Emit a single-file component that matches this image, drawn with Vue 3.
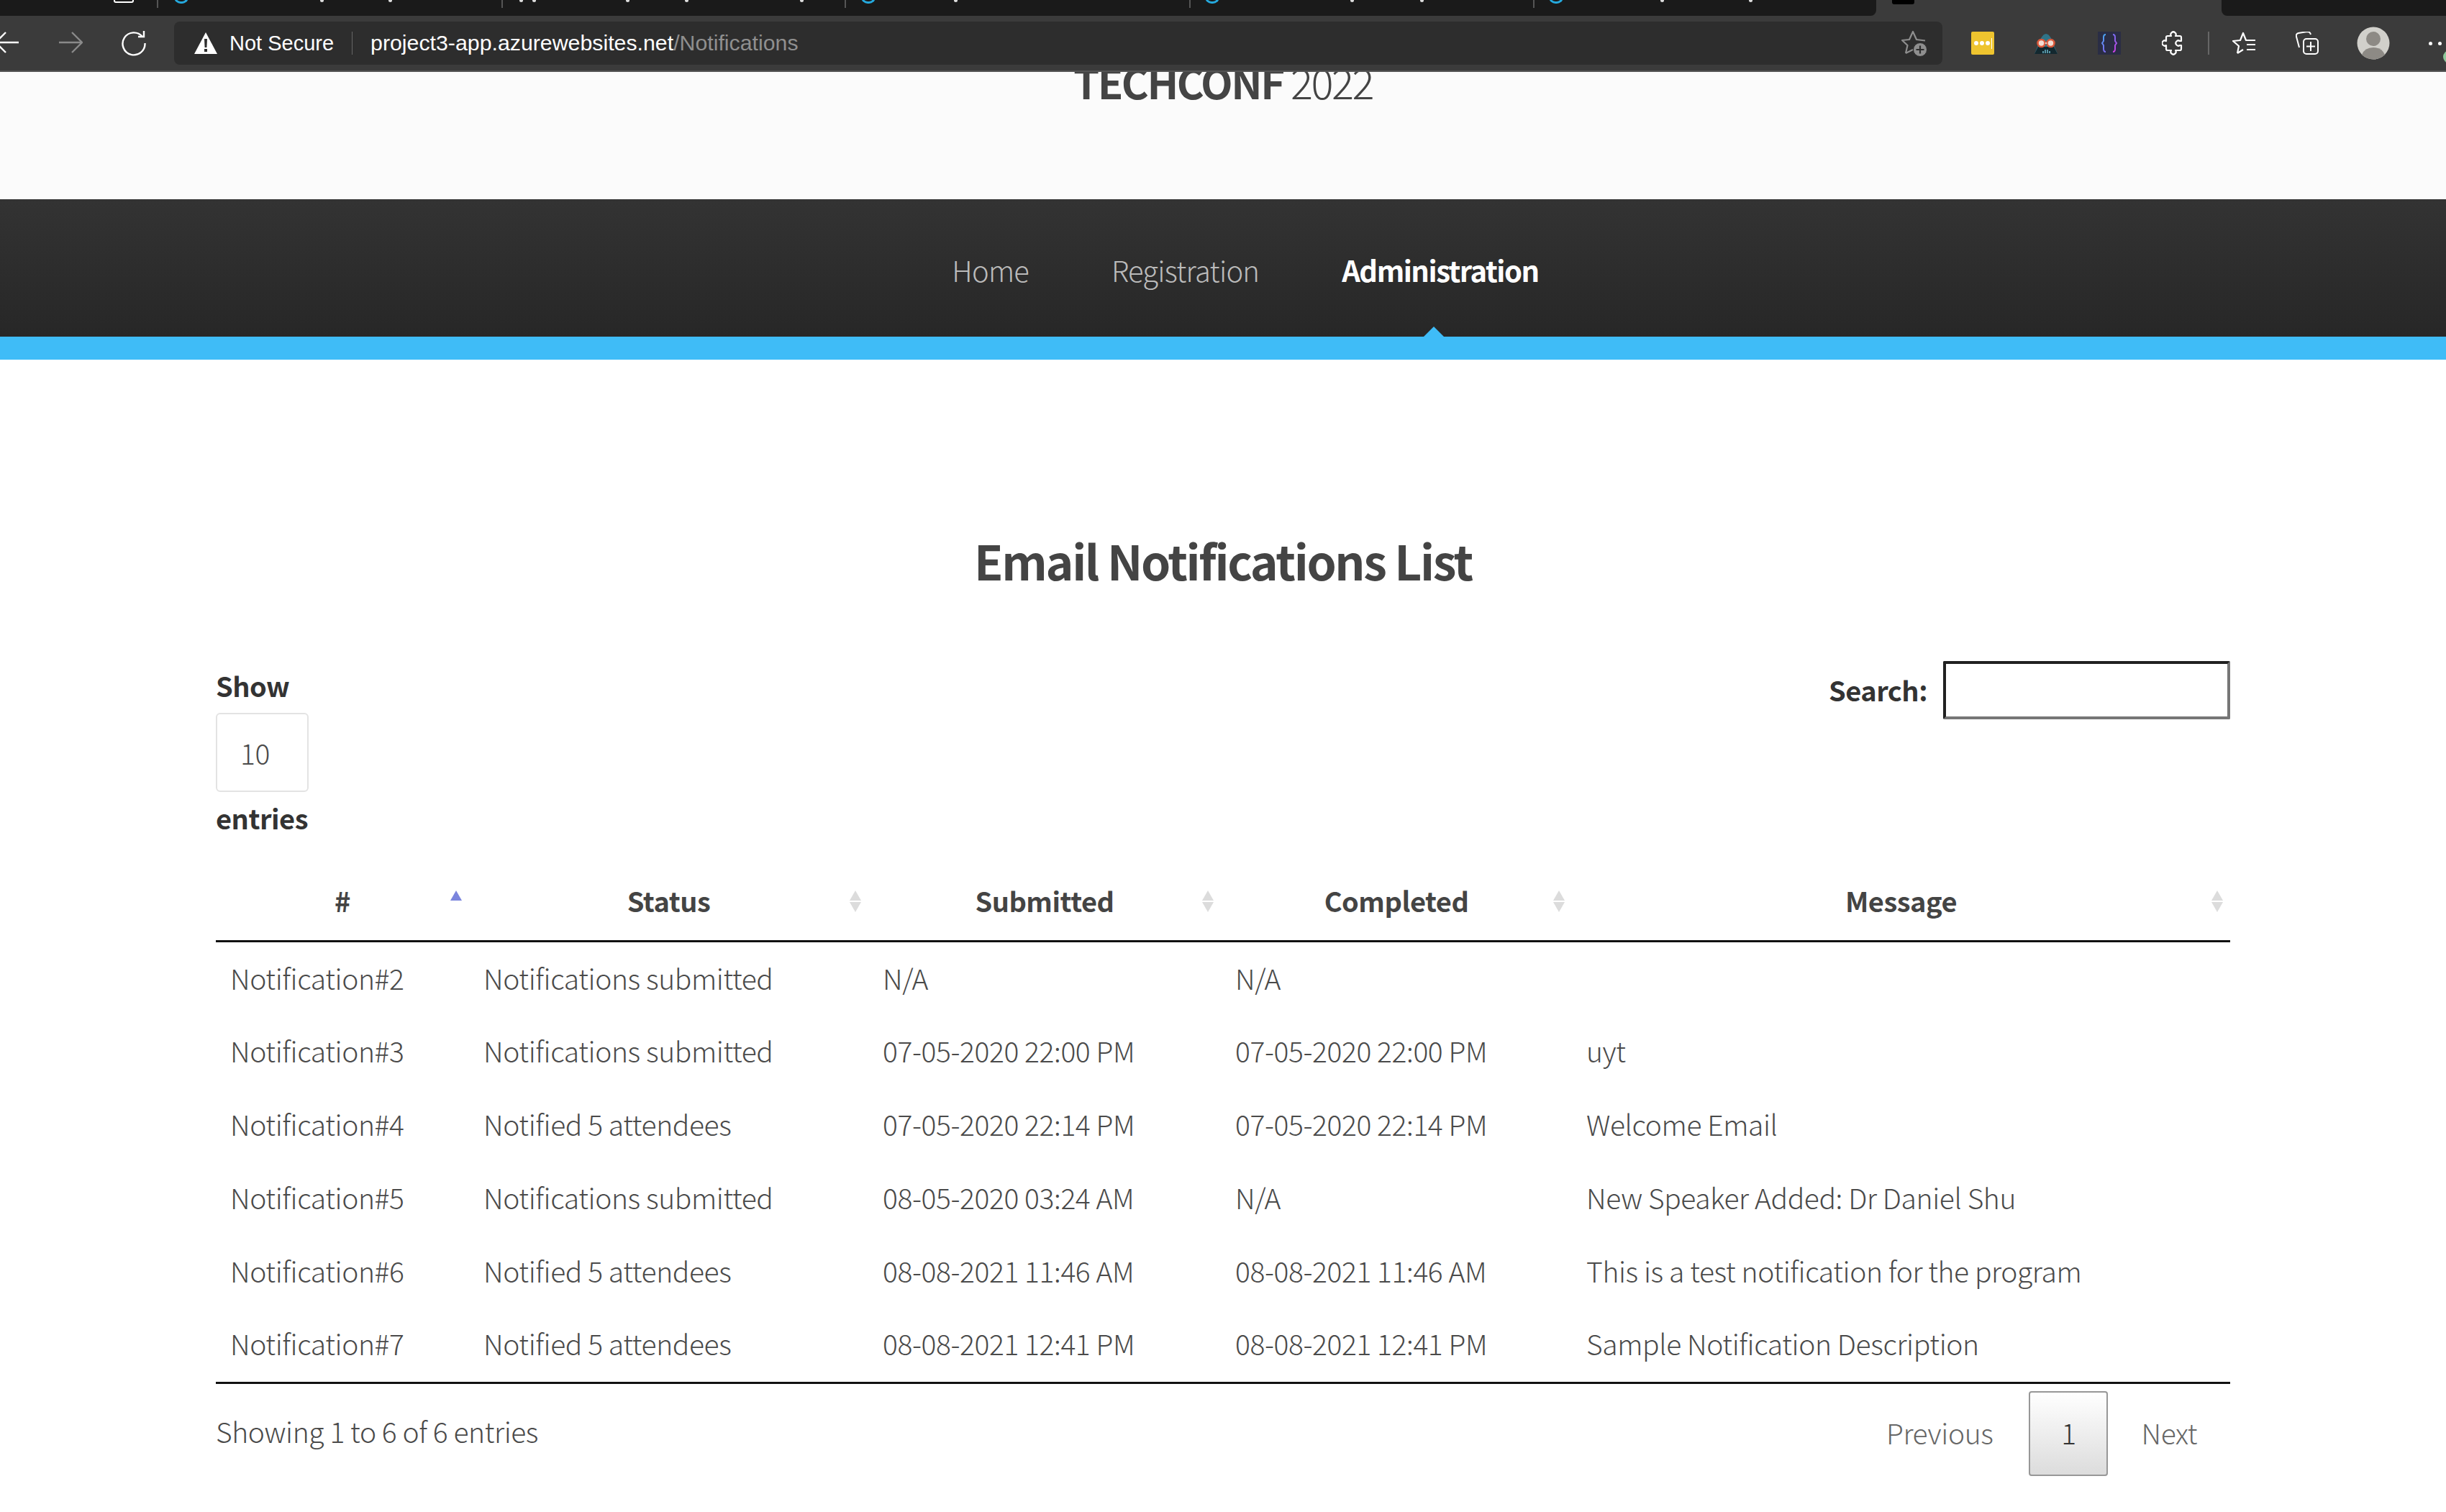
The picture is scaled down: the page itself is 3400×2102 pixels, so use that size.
<template>
  <div class="page">
    <!-- browser chrome -->
    <div class="chrome">
      <div class="tabstrip">
        <div class="tabs-left">
          <span v-for="x in tabSeps" :key="x" class="tab-sep" :style="{ left: x + 'px' }"></span>
          <span v-for="x in tabFavs" :key="x" class="tab-fav-blue" :style="{ left: x + 'px' }"></span>
          <span v-for="x in tabStubs" :key="x" class="tab-stub" :style="{ left: x + 'px' }"></span>
          <span class="tab-home"></span>
        </div>
        <div class="tab-active"><span class="tab-fav"></span></div>
        <div class="tabs-right"></div>
      </div>
      <div class="toolbar">
        <div class="nav-btns">
          <svg class="back" width="24" height="40" viewBox="0 0 24 40"><path d="M-6 19H26M8 5L-6 19L8 33" fill="none" stroke="#fff" stroke-width="2.400"/></svg>
          <svg class="forward" width="34" height="40" viewBox="0 0 34 40"><path d="M1 19H33M19 5L33 19L19 33" fill="none" stroke="#8a8a8a" stroke-width="2.400"/></svg>
          <svg class="reload" width="36" height="40" viewBox="0 0 36 40"><path d="M30 11A15.500 15.500 0 1 0 33.500 20" fill="none" stroke="#fff" stroke-width="2.400"/><path d="M32 3V11H24" fill="none" stroke="#fff" stroke-width="2.400"/></svg>
        </div>
        <div class="address">
          <svg width="32" height="30" viewBox="0 0 32 30"><path d="M16 0L32 30H0Z" fill="#fff"/><path d="M14 9h4l-.6 12h-2.800zM14 23h4v4h-4z" fill="#2d2d2d"/></svg>
          <span class="secure">Not Secure</span>
          <span class="addr-sep"></span>
          <span class="url">project3-app.azurewebsites.net<span class="url-path">/Notifications</span></span>
          <svg class="fav-add" width="38" height="38" viewBox="0 0 38 38">
            <path d="M7 33L9.500 22L2 15L12 14L17 3L22 14L34 15.500M7 33L17 28" fill="none" stroke="#8e8e8e" stroke-width="2.200" stroke-linejoin="round"/>
            <circle cx="27" cy="28" r="9.500" fill="#8e8e8e" stroke="#2d2d2d" stroke-width="1"/>
            <path d="M21.500 28H32.500M27 22.500V33.500" stroke="#2d2d2d" stroke-width="2.200"/>
          </svg>
        </div>
        <div class="ext-icons">
          <div class="ext-pass"><span></span><span></span><span></span><i></i></div>
          <svg class="ext-darth" width="32" height="30" viewBox="0 0 32 30">
            <path d="M9 8Q16 -4 23 8L32 30H0Z" fill="#2f7488"/>
            <path d="M5 20H27L32 30H0Z" fill="#13282f"/>
            <circle cx="9.500" cy="15" r="5" fill="#f3ddd3" stroke="#d9583a" stroke-width="2.600"/>
            <circle cx="22.500" cy="15" r="5" fill="#f3ddd3" stroke="#d9583a" stroke-width="2.600"/>
            <path d="M14.500 15H17.500" stroke="#f3ddd3" stroke-width="1.500"/>
            <path d="M12 26V29M15 24V29M18 24V29M21 26V29" stroke="#6db6cc" stroke-width="1.500"/>
          </svg>
          <svg class="ext-braces" width="32" height="32" viewBox="0 0 32 32">
            <defs>
              <linearGradient id="braceL" x1="0" y1="0" x2="0" y2="1"><stop offset="0" stop-color="#4aa3f0"/><stop offset="1" stop-color="#7a6cf0"/></linearGradient>
              <linearGradient id="braceR" x1="0" y1="0" x2="0" y2="1"><stop offset="0" stop-color="#7a6cf0"/><stop offset="1" stop-color="#c840e0"/></linearGradient>
            </defs>
            <rect width="32" height="32" fill="#2a2d45"/>
            <path d="M11 4Q8 4 8 8V13L6 16L8 19V24Q8 28 11 28" fill="none" stroke="url(#braceL)" stroke-width="2"/>
            <path d="M21 4Q24 4 24 8V13L26 16L24 19V24Q24 28 21 28" fill="none" stroke="url(#braceR)" stroke-width="2"/>
          </svg>
          <svg class="ext-puzzle" width="30" height="34" viewBox="0 0 30 34"><path d="M8 7H13A3.600 3.600 0 1 1 19 7H25Q27 7 27 9V14H25A3.600 3.600 0 1 0 25 20H27V25Q27 27 25 27H19A3.600 3.600 0 1 1 13 27H8Q6 27 6 25V20A3.600 3.600 0 1 1 6 14V9Q6 7 8 7Z" fill="none" stroke="#fff" stroke-width="2.200" stroke-linejoin="round"/></svg>
          <span class="tool-sep"></span>
          <svg class="ext-favs" width="32" height="32" viewBox="0 0 32 32"><path d="M7 30L9 20L1 13L11 12L15 2L19 12H32M20 18H32M20 25H32M7 30L15 25" fill="none" stroke="#fff" stroke-width="2.200" stroke-linejoin="round"/></svg>
          <svg class="ext-coll" width="32" height="32" viewBox="0 0 32 32"><path d="M5 22L1 7Q0 3 4 2L16 0Q20 0 21 4" fill="none" stroke="#fff" stroke-width="2"/><rect x="11" y="10" width="20" height="21" rx="4" fill="none" stroke="#fff" stroke-width="2"/><path d="M21 14V27M15 20.500H27" stroke="#fff" stroke-width="2"/></svg>
          <svg class="avatar" width="46" height="46" viewBox="0 0 46 46"><circle cx="23" cy="23" r="22.500" fill="#d1d0cb"/><circle cx="23" cy="17" r="10" fill="#8d8a85"/><path d="M7 39Q11 29 23 29Q35 29 39 39Q32 45.500 23 45.500Q14 45.500 7 39Z" fill="#8d8a85"/></svg>
          <div class="more"><span></span><span></span><span></span></div>
          <span class="chip"></span>
        </div>
      </div>
    </div>

    <!-- site header -->
    <header class="banner">
      <h1 class="brand"><b>TECHCONF</b> 2022</h1>
    </header>
    <nav class="mainnav">
      <a class="nav-link">Home</a>
      <a class="nav-link">Registration</a>
      <a class="nav-link active">Administration</a>
    </nav>

    <main class="content">
      <h2 class="page-title">Email Notifications List</h2>

      <div class="controls">
        <label class="length">
          <span>Show</span>
          <span class="length-box">10</span>
          <span>entries</span>
        </label>
        <label class="search">
          <span class="search-label">Search:</span>
          <input type="text" class="search-input" />
        </label>
      </div>

      <table class="grid">
        <colgroup>
          <col v-for="w in colWidths" :key="w" :style="{ width: w + 'px' }" />
        </colgroup>
        <thead>
          <tr>
            <th v-for="(h, i) in headers" :key="h">
              {{ h }}
              <span class="sort">
                <svg width="16" height="30" viewBox="0 0 16 30">
                  <path d="M8 0L16 14H0Z" :fill="i === 0 ? '#7b85dd' : '#dcdcdc'" />
                  <path v-if="i !== 0" d="M0 16H16L8 30Z" fill="#dcdcdc" />
                </svg>
              </span>
            </th>
          </tr>
        </thead>
        <tbody>
          <tr v-for="row in rows" :key="row[0]">
            <td v-for="(cell, i) in row" :key="i">{{ cell }}</td>
          </tr>
        </tbody>
      </table>

      <div class="table-foot">
        <div class="info">Showing 1 to 6 of 6 entries</div>
        <div class="pager">
          <a class="page-btn prev">Previous</a>
          <a class="page-btn current">1</a>
          <a class="page-btn">Next</a>
        </div>
      </div>
    </main>
  </div>
</template>

<script setup>
const tabSeps = [218, 697, 1174, 1653, 2131]
const tabFavs = [242, 1197, 1675, 2153]
const tabStubs = [445, 540, 722, 740, 870, 952, 1112, 1326, 1877, 1974, 2308, 2431]
const colWidths = [352, 555, 490, 488, 915]
const headers = ['#', 'Status', 'Submitted', 'Completed', 'Message']
const rows = [
  ['Notification#2', 'Notifications submitted', 'N/A', 'N/A', ''],
  ['Notification#3', 'Notifications submitted', '07-05-2020 22:00 PM', '07-05-2020 22:00 PM', 'uyt'],
  ['Notification#4', 'Notified 5 attendees', '07-05-2020 22:14 PM', '07-05-2020 22:14 PM', 'Welcome Email'],
  ['Notification#5', 'Notifications submitted', '08-05-2020 03:24 AM', 'N/A', 'New Speaker Added: Dr Daniel Shu'],
  ['Notification#6', 'Notified 5 attendees', '08-08-2021 11:46 AM', '08-08-2021 11:46 AM', 'This is a test notification for the program'],
  ['Notification#7', 'Notified 5 attendees', '08-08-2021 12:41 PM', '08-08-2021 12:41 PM', 'Sample Notification Description'],
]
</script>

<style>
html,
body {
  margin: 0;
  background: #fff;
}
</style>

<style scoped>
.page {
  width: 3400px;
  height: 2102px;
  overflow: hidden;
  font-family: "Noto Sans CJK SC", "Noto Sans", sans-serif;
  font-weight: 300;
  color: #4a4a4a;
  font-size: 39px;
  letter-spacing: -0.4px;
}

.chrome {
  height: 98px;
  background: #3b3b3b;
  border-bottom: 2px solid #555;
  font-family: "Liberation Sans", sans-serif;
  font-weight: 400;
  letter-spacing: 0;
}

.tabstrip {
  height: 22px;
  display: flex;
}

.tabs-left {
  position: relative;
  width: 2608px;
  background: #1a1a1a;
  border-bottom-right-radius: 8px;
  overflow: hidden;
}

.tab-sep {
  position: absolute;
  top: 0;
  width: 2px;
  height: 11px;
  background: #555;
}

.tab-fav-blue {
  position: absolute;
  top: -4px;
  width: 20px;
  height: 9px;
  box-sizing: border-box;
  border: 3px solid #25a8dc;
  border-top: 0;
  border-radius: 0 0 12px 12px;
}

.tab-stub {
  position: absolute;
  top: 0;
  width: 5px;
  height: 3px;
  background: #ddd;
  border-radius: 0 0 3px 3px;
}

.tab-home {
  position: absolute;
  top: -4px;
  left: 158px;
  width: 28px;
  height: 8px;
  box-sizing: border-box;
  border: 2px solid #fff;
  border-radius: 3px;
}

.tab-active {
  width: 480px;
}

.tab-fav {
  display: block;
  width: 31px;
  height: 6px;
  margin-left: 22px;
  background: #000;
  border-radius: 0 0 3px 3px;
}

.tabs-right {
  flex: 1;
  background: #1a1a1a;
  border-bottom-left-radius: 8px;
}

.toolbar {
  height: 60px;
  margin-top: 8px;
  display: flex;
  align-items: center;
}

.nav-btns {
  flex: none;
  width: 242px;
  display: flex;
  align-items: center;
}

.back {
  overflow: visible;
}

.forward {
  margin-left: 57px;
}

.reload {
  margin-left: 53px;
}

.address {
  flex: none;
  width: 2458px;
  height: 60px;
  background: #2d2d2d;
  border-radius: 8px;
  display: flex;
  align-items: center;
  padding-left: 28px;
  box-sizing: border-box;
  color: #fff;
  font-size: 29px;
}

.secure {
  margin-left: 17px;
}

.addr-sep {
  width: 1px;
  height: 32px;
  background: #666;
  margin: 0 25px;
}

.url {
  font-size: 30.300px;
}

.url-path {
  color: #8f8f8f;
}

.fav-add {
  margin-left: auto;
  margin-right: 20px;
}

.ext-icons {
  position: relative;
  flex: 1;
  min-width: 0;
  display: flex;
  align-items: center;
  padding-left: 40px;
}

.ext-icons svg {
  flex: none;
}

.ext-pass {
  flex: none;
  width: 32px;
  height: 32px;
  background: #eec42f;
  border-radius: 2px;
  display: flex;
  align-items: center;
  justify-content: center;
  gap: 2px;
}

.ext-pass span {
  width: 6px;
  height: 6px;
  border-radius: 50%;
  background: #fff;
}

.ext-pass i {
  width: 1px;
  height: 15px;
  background: #fff;
}

.ext-darth {
  margin-left: 56px;
}

.ext-braces {
  margin-left: 56px;
}

.ext-puzzle {
  margin-left: 57px;
}

.tool-sep {
  flex: none;
  width: 2px;
  height: 32px;
  margin-left: 34px;
  background: #666;
}

.ext-favs {
  margin-left: 32px;
}

.ext-coll {
  margin-left: 56px;
}

.avatar {
  margin-left: 53px;
}

.more {
  display: flex;
  gap: 8px;
  margin-left: 54px;
  flex: none;
}

.more span {
  flex: none;
  width: 5px;
  height: 5px;
  background: #fff;
  border-radius: 50%;
}

/* green profile dot, cut by the window edge */
.chip {
  position: absolute;
  left: 696px;
  top: 33px;
  width: 18px;
  height: 18px;
  border-radius: 50%;
  background: #8fc79a;
}

.banner {
  height: 177px;
  background: #fbfbfb;
  overflow: hidden;
  text-align: center;
}

.brand {
  margin: -23px 0 0;
  font-size: 58px;
  line-height: 72px;
  font-weight: 300;
  letter-spacing: -2.500px;
  color: #444;
}

.brand b {
  font-weight: 700;
}

.mainnav {
  height: 191px;
  background: linear-gradient(#333, #272727);
  border-bottom: 32px solid #3fbcf7;
  display: flex;
  justify-content: center;
  align-items: center;
  gap: 115px;
  padding-left: 62px;
}

.nav-link {
  position: relative;
  padding-top: 4px;
  font-size: 40px;
  line-height: 60px;
  letter-spacing: -0.800px;
  color: #bbb;
  font-weight: 300;
}

.nav-link.active {
  color: #fff;
  font-weight: 700;
  letter-spacing: -1.500px;
}

/* little notch over the blue strip */
.nav-link.active::after {
  content: "";
  position: absolute;
  left: 50%;
  bottom: -65px;
  margin-left: -25px;
  border-left: 16px solid transparent;
  border-right: 16px solid transparent;
  border-bottom: 16px solid #3fbcf7;
}

.content {
  padding: 0 300px;
}

.page-title {
  margin: 0;
  padding-top: 233px;
  text-align: center;
  font-size: 66px;
  line-height: 90px;
  font-weight: 700;
  letter-spacing: -2.350px;
  color: #444;
}

.controls {
  display: flex;
  justify-content: space-between;
  align-items: flex-start;
  margin-top: 96px;
}

.length {
  display: flex;
  flex-direction: column;
  align-items: flex-start;
  font-weight: 700;
  font-size: 38px;
  letter-spacing: -0.500px;
  color: #333;
  line-height: 60px;
  margin-top: 4px;
}

.length-box {
  box-sizing: border-box;
  width: 129px;
  height: 110px;
  margin: 8px 0 6px;
  border: 2px solid #e3e3e3;
  border-radius: 6px;
  padding-left: 32px;
  display: flex;
  align-items: center;
  font-size: 39px;
  letter-spacing: -0.400px;
  font-weight: 300;
  color: #4a4a4a;
}

.search {
  display: flex;
  align-items: center;
  gap: 22px;
  font-weight: 700;
  font-size: 38px;
  letter-spacing: -0.500px;
  color: #333;
}

.search-label {
  padding-bottom: 3px;
}

.search-input {
  box-sizing: border-box;
  width: 399px;
  height: 81px;
  border: 4px inset #767676;
  border-radius: 2px;
  background: #fff;
  padding: 0;
}

.grid {
  width: 2800px;
  margin-top: 28px;
  border-collapse: collapse;
  table-layout: fixed;
  border-bottom: 3px solid #111;
}

.grid th {
  position: relative;
  height: 112px;
  font-weight: 700;
  font-size: 38px;
  letter-spacing: -0.500px;
  text-align: center;
  color: #444;
  border-bottom: 3px solid #111;
  padding: 0;
}

.sort {
  position: absolute;
  right: 10px;
  top: 43px;
}

.sort svg {
  display: block;
}

.grid td {
  box-sizing: border-box;
  height: 102px;
  padding: 0 20px 3px;
  white-space: nowrap;
}

.grid tbody tr:last-child td {
  height: 104px;
  padding-bottom: 5px;
}

.table-foot {
  display: flex;
  justify-content: space-between;
  align-items: flex-start;
  padding-top: 10px;
}

.info {
  line-height: 118px;
  height: 118px;
  margin-top: -4px;
}

.pager {
  display: flex;
  align-items: center;
}

.page-btn {
  box-sizing: border-box;
  height: 118px;
  display: flex;
  align-items: center;
  padding: 0 46px 4px;
  color: #666;
}

.page-btn.prev {
  padding-right: 50px;
}

.page-btn.current {
  width: 110px;
  padding: 0 0 4px;
  justify-content: center;
  color: #333;
  border: 2px solid #979797;
  border-radius: 4px;
  background: linear-gradient(#fff, #dcdcdc);
}
</style>
